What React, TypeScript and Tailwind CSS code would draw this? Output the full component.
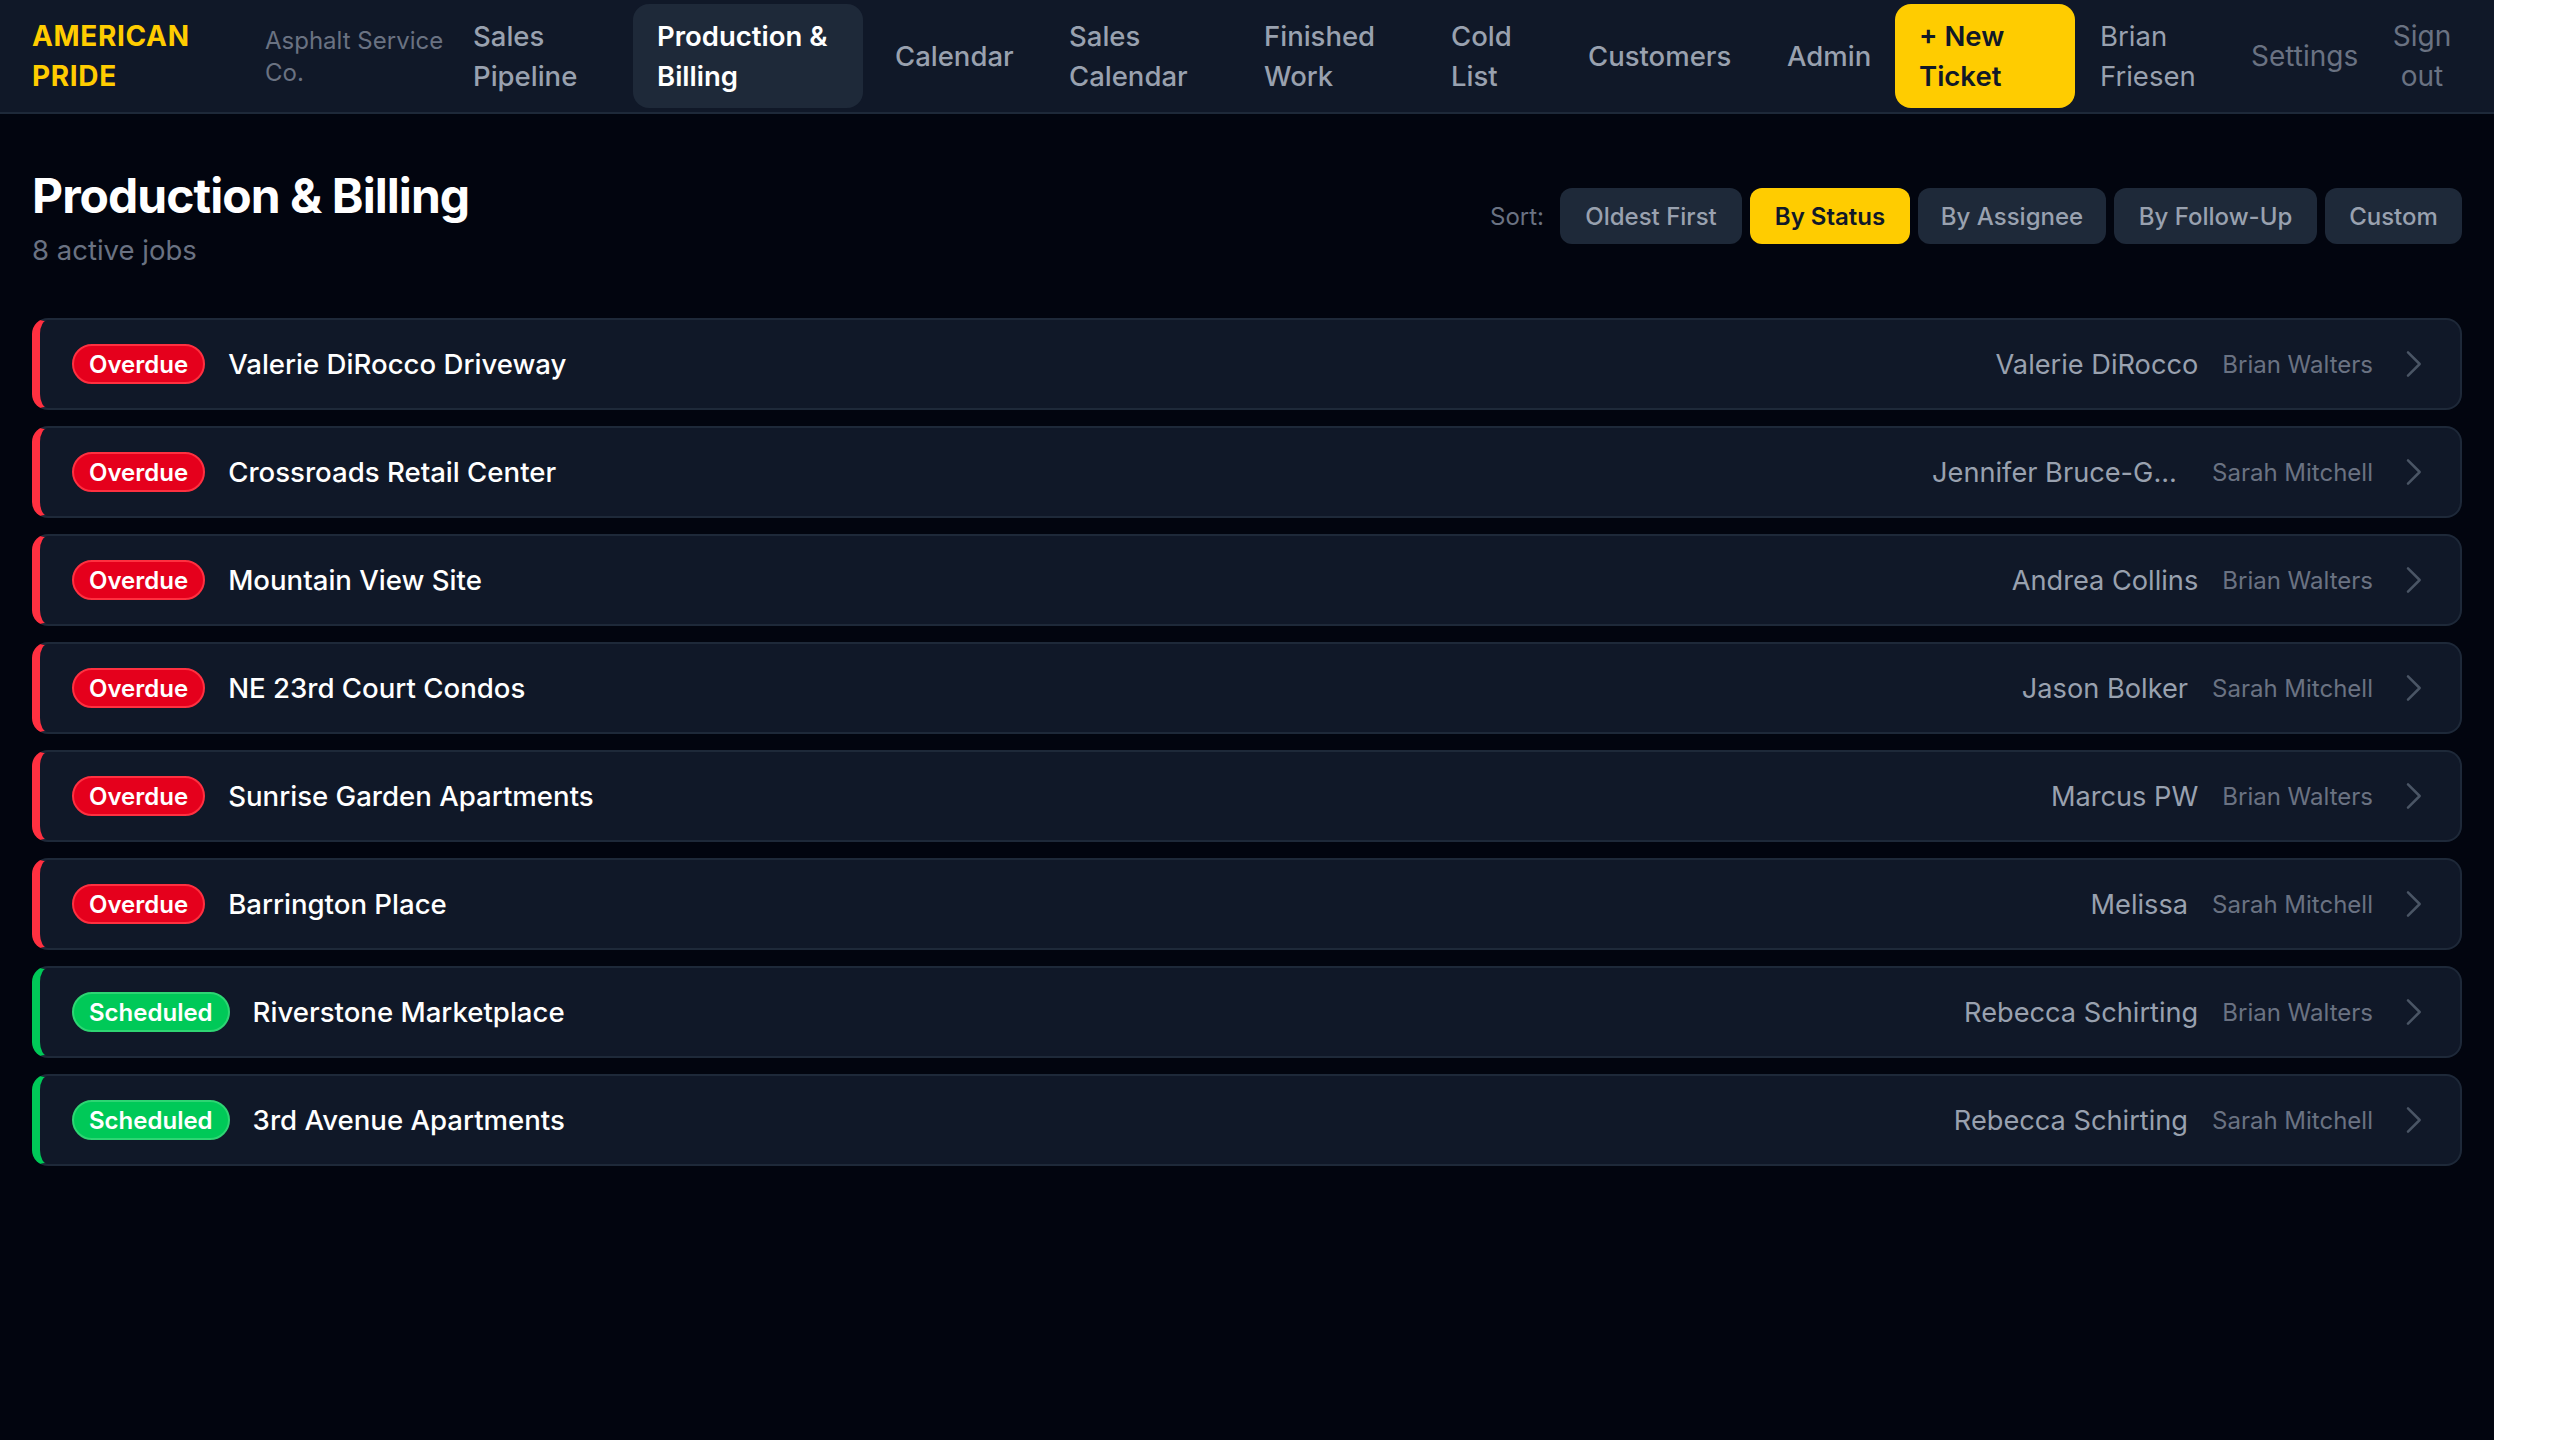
const font = { fontFamily: 'Inter, "Liberation Sans", sans-serif' };

type NavItem = { label: string; w: string; active?: boolean };

const navItems: NavItem[] = [
  { label: "Sales Pipeline", w: "w-[176px]" },
  { label: "Production & Billing", w: "w-[230px]", active: true },
  { label: "Calendar", w: "w-[166px]" },
  { label: "Sales Calendar", w: "w-[187px]" },
  { label: "Finished Work", w: "w-[179px]" },
  { label: "Cold List", w: "w-[129px]" },
  { label: "Customers", w: "w-[191px]" },
  { label: "Admin", w: "w-[131px]" },
];

type Job = { status: "Overdue" | "Scheduled"; title: string; contact: string; assignee: string };

const jobs: Job[] = [
  { status: "Overdue", title: "Valerie DiRocco Driveway", contact: "Valerie DiRocco", assignee: "Brian Walters" },
  { status: "Overdue", title: "Crossroads Retail Center", contact: "Jennifer Bruce-G...", assignee: "Sarah Mitchell" },
  { status: "Overdue", title: "Mountain View Site", contact: "Andrea Collins", assignee: "Brian Walters" },
  { status: "Overdue", title: "NE 23rd Court Condos", contact: "Jason Bolker", assignee: "Sarah Mitchell" },
  { status: "Overdue", title: "Sunrise Garden Apartments", contact: "Marcus PW", assignee: "Brian Walters" },
  { status: "Overdue", title: "Barrington Place", contact: "Melissa", assignee: "Sarah Mitchell" },
  { status: "Scheduled", title: "Riverstone Marketplace", contact: "Rebecca Schirting", assignee: "Brian Walters" },
  { status: "Scheduled", title: "3rd Avenue Apartments", contact: "Rebecca Schirting", assignee: "Sarah Mitchell" },
];

const sorts = [
  { label: "Oldest First", w: "w-[182px]" },
  { label: "By Status", w: "w-[160px]" },
  { label: "By Assignee", w: "w-[188px]" },
  { label: "By Follow-Up", w: "w-[203px]" },
  { label: "Custom", w: "w-[137px]" },
];

function Header() {
  return (
    <header className="flex items-center bg-[#101828] border-b-2 border-[#1e2939] pl-8 py-1 h-[114px]">
      <div className="w-[233px] shrink-0 text-[28px] leading-[40px] font-bold tracking-[0.65px] text-[#ffcc00]">
        <div>AMERICAN</div>
        <div>PRIDE</div>
      </div>
      <div className="w-[184px] shrink-0 pt-[2px] text-[24px] leading-[32px] text-[#6a7282]">Asphalt Service Co.</div>
      <nav className="flex items-center gap-2">
        {navItems.map((n) => (
          <a
            key={n.label}
            className={`${n.w} shrink-0 px-6 py-3 rounded-2xl text-[27.5px] leading-[40px] ${
              n.active ? "bg-[#1e2939] text-white font-semibold" : "text-[#99a1af] font-medium"
            }`}
          >
            {n.label}
          </a>
        ))}
      </nav>
      <a className="w-[180px] shrink-0 px-6 py-3 rounded-2xl bg-[#ffcc00] text-[#101828] text-[27.5px] leading-[40px] font-semibold ml-px">
        + New Ticket
      </a>
      <span className="w-[150px] shrink-0 pl-[25px] text-[27.5px] leading-[40px] text-[#99a1af]">Brian Friesen</span>
      <span className="w-[157px] shrink-0 pl-[26px] text-[28px] leading-[40px] text-[#6a7282]">Settings</span>
      <span className="w-[80px] shrink-0 text-center text-[28px] leading-[40px] text-[#6a7282]">Sign out</span>
    </header>
  );
}

function Row({ job }: { job: Job }) {
  const overdue = job.status === "Overdue";
  const truncated = job.contact.endsWith("...");
  return (
    <div
      className={`flex items-center h-[92px] pl-8 pr-[27px] bg-[#101828] rounded-2xl border-2 border-l-8 border-[#1e2939] ${
        overdue ? "border-l-[#ff3040]" : "border-l-[#00c958]"
      }`}
    >
      <span
        className={`shrink-0 px-[15px] h-10 pt-px flex items-center rounded-full border-2 text-[24px] leading-[32px] font-semibold text-white ${
          overdue ? "bg-[#e5001c] border-[#ff3040]" : "bg-[#00c958] border-[#2ed573]"
        }`}
      >
        {job.status}
      </span>
      <span className="ml-[23px] flex-1 min-w-0 text-[27.6px] leading-[40px] font-medium text-white">{job.title}</span>
      <span
        className={`ml-6 pt-px whitespace-nowrap text-[27.2px] leading-[40px] text-[#99a1af] ${
          truncated ? "w-[256px]" : ""
        }`}
      >
        {job.contact}
      </span>
      <span className="ml-6 pt-[2px] text-[24px] leading-[32px] text-[#6a7282]">{job.assignee}</span>
      <svg className="ml-5 w-10 h-10 shrink-0 text-[#4a5565]" viewBox="0 0 24 24" fill="none" stroke="currentColor" strokeWidth="1.5" strokeLinecap="round" strokeLinejoin="round">
        <path d="M9 5l7 7-7 7" />
      </svg>
    </div>
  );
}

export default function App() {
  return (
    <div className="w-[2494px] min-h-[1440px] bg-[#02050f]" style={font}>
      <Header />
      <main className="px-8 pt-12">
        <div className="flex items-center justify-between mb-12">
          <div>
            <h1 className="text-[48px] leading-[67px] font-bold tracking-[-0.95px] text-white">Production &amp; Billing</h1>
            <p className="pt-px text-[27.5px] leading-[40px] text-[#6a7282]">8 active jobs</p>
          </div>
          <div className="flex items-center gap-2">
            <span className="mr-2 pt-px text-[24px] leading-[32px] text-[#6a7282]">Sort:</span>
            {sorts.map((s) => (
              <button
                key={s.label}
                className={`${s.w} h-14 pt-px rounded-xl text-[24px] leading-[32px] font-medium ${
                  s.label === "By Status" ? "bg-[#ffcc00] text-[#101828] font-semibold" : "bg-[#1e2939] text-[#99a1af]"
                }`}
              >
                {s.label}
              </button>
            ))}
          </div>
        </div>
        <div className="flex flex-col gap-4">
          {jobs.map((j) => (
            <Row key={j.title} job={j} />
          ))}
        </div>
      </main>
    </div>
  );
}
